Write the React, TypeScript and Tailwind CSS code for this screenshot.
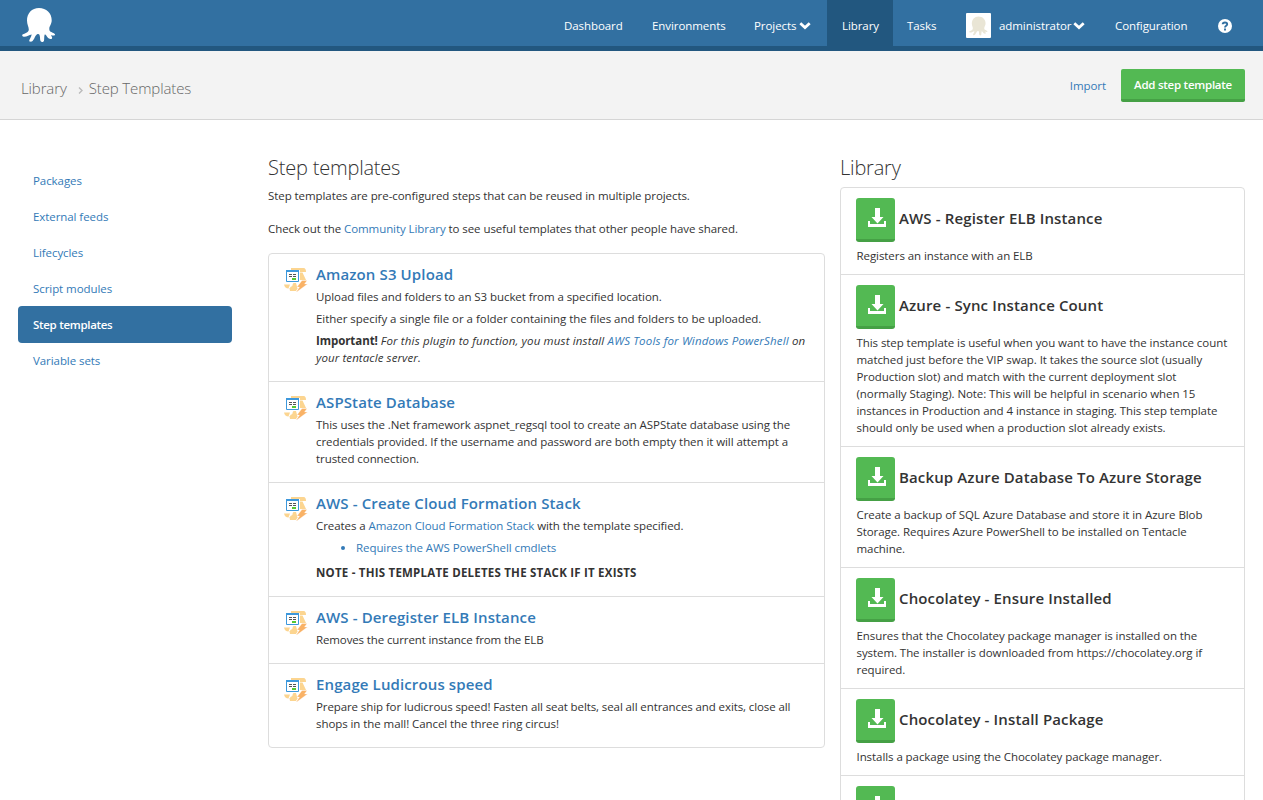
import type { ReactNode } from "react";

const link = "text-[#337ab7]";

function Octopus({ className }: { className: string }) {
  return (
    <svg viewBox="0 0 34 36" className={className} fill="currentColor" aria-hidden="true">
      <path d="M17 1C9.800 1 5 6.300 5 13.500C5 17.500 6.800 19.500 6.800 22.500C6.800 25.300 3.500 26.300.9 27.300C-.4 28 .2 29.600 1.700 29.700C5 29.900 7 28 9.700 27.400C9.200 30.500 7.200 32.300 7.200 33.700C7.400 34.900 9.500 34.900 10.600 33.900C12.600 32 13.200 28 15.600 27C17 26.600 17.500 27.500 17.800 29C18.200 31 17.900 33 18.700 34.300C19.500 35.300 21.500 35.100 22 33.700C22.400 31.900 22 29.600 22.600 27.700C24 27.200 24.300 29.200 25.700 30.500C27 31.800 28.800 32.500 29.800 31.700C30.700 30.700 29.800 29.500 28.800 28.300C30.500 28.300 31.700 29 32.700 28.200C33.700 27 32.200 26.500 31.300 25.900C29.500 24.900 27.300 24.800 27.300 21.900C27.300 19 29.700 17.300 29.700 13.300C29.700 6 24.300 1 17 1Z" />
    </svg>
  );
}

function Chevron() {
  return (
    <svg viewBox="0 0 12 8" className="h-2 w-3 shrink-0" aria-hidden="true">
      <path d="M1.300 1.300 6 5.500 10.700 1.300" fill="none" stroke="currentColor" strokeWidth="2.800" />
    </svg>
  );
}

function StepIcon() {
  return (
    <svg viewBox="0 0 24 24" className="mt-1 h-6 w-6 shrink-0" aria-hidden="true">
      <path d="M7 0H19.500C21.500 0 22 2 22 4H16V2H7Z" fill="#fcd590" />
      <path d="M16 4.500H18.500L22 12H16Z" fill="#fcd590" />
      <path d="M0 16.500H6L4.500 20.500C2 20.500.5 19 0 16.500Z" fill="#fcd590" />
      <path d="M5.500 20.500 9.500 15H12L13.500 20.500 12 23H6Z" fill="#fcd590" />
      <path d="M7 16.500H9L7.500 19Z" fill="#fff" />
      <path d="M18 12.500H23L20.500 16H23.500L12 24.500 15.500 19H13Z" fill="#f9b266" stroke="#fff" strokeWidth=".3" />
      <path d="M2.500 2.500H14.500V13.500H2.500Z" fill="#fff" stroke="#3d98dc" strokeWidth="1" />
      <path d="M2 2H15V4H2Z" fill="#3d98dc" />
      <path d="M5 6.500H8M9 6.500H12M5 8.500H8M9 8.500H12" stroke="#555" strokeWidth="1" />
      <path d="M8 10H12V12H8Z" fill="#55c933" />
    </svg>
  );
}

function DownloadIcon() {
  return (
    <svg viewBox="0 0 18 19" className="h-[19px] w-[18px]" fill="#fff" aria-hidden="true">
      <path d="M7 0H12V9H15.500L9.500 15.500 3.500 9H7Z" />
      <path d="M0 13H2V16H16V13H18V19H0Z" />
    </svg>
  );
}

function Lines({ items }: { items: ReactNode[] }) {
  return (
    <p className="mb-[5px]">
      {items.map((line, i) => (
        <span key={i} className="block whitespace-nowrap">{line}</span>
      ))}
    </p>
  );
}

function Step({ title, children }: { title: string; children: ReactNode }) {
  return (
    <article className="flex gap-2 border-t border-[#ddd] py-[10px] pl-[15px] first:border-t-0">
      <StepIcon />
      <div className="min-w-0">
        <h3 className="-mt-px mb-[3px] text-[15px] leading-[22px] font-semibold tracking-[0.12px] whitespace-nowrap text-[#337ab7]">{title}</h3>
        {children}
      </div>
    </article>
  );
}

const library: { title: string; lines: string[] }[] = [
  { title: "AWS - Register ELB Instance", lines: ["Registers an instance with an ELB"] },
  {
    title: "Azure - Sync Instance Count",
    lines: [
      "This step template is useful when you want to have the instance count",
      "matched just before the VIP swap. It takes the source slot (usually",
      "Production slot) and match with the current deployment slot",
      "(normally Staging). Note: This will be helpful in scenario when 15",
      "instances in Production and 4 instance in staging. This step template",
      "should only be used when a production slot already exists.",
    ],
  },
  {
    title: "Backup Azure Database To Azure Storage",
    lines: [
      "Create a backup of SQL Azure Database and store it in Azure Blob",
      "Storage. Requires Azure PowerShell to be installed on Tentacle",
      "machine.",
    ],
  },
  {
    title: "Chocolatey - Ensure Installed",
    lines: [
      "Ensures that the Chocolatey package manager is installed on the",
      "system. The installer is downloaded from https://chocolatey.org if",
      "required.",
    ],
  },
  { title: "Chocolatey - Install Package", lines: ["Installs a package using the Chocolatey package manager."] },
  { title: "", lines: [] },
];

export default function App() {
  return (
    <div className="h-[800px] w-[1263px] overflow-hidden bg-white font-['Open_Sans',sans-serif] text-[11.5px] leading-[17px] tracking-[-0.07px] text-[#333]">
      <header className="flex h-[51px] justify-between border-b-[5px] border-[#22577f] bg-[#3270a1] text-white">
        <Octopus className="mt-[7px] ml-[22px] h-9 w-[34px]" />
        <nav className="flex h-[46px] items-center pt-[5px] whitespace-nowrap">
          <a className="w-[88px]">Dashboard</a>
          <a className="w-[102px]">Environments</a>
          <a className="flex w-[73px] items-center gap-[3px]">Projects <Chevron /></a>
          <a className="-mt-[5px] flex h-[51px] w-[66px] items-center self-start bg-[#22577f] pl-[15px]">Library</a>
          <a className="w-[73px] pl-[14px]">Tasks</a>
          <a className="flex w-[149px] items-center">
            <span className="mr-2 flex h-[25px] w-[25px] items-center justify-center rounded-[1px] bg-white text-[#e9e5d5]">
              <Octopus className="h-5 w-[19px]" />
            </span>
            administrator<span className="ml-[2px]"><Chevron /></span>
          </a>
          <a className="w-[103px]">Configuration</a>
          <svg viewBox="0 0 14 14" className="mr-[31px] h-[14px] w-[14px]" aria-label="Help">
            <circle cx="7" cy="7" r="7" fill="#fff" />
            <path d="M4.700 5.300C4.800 2.800 9.300 2.900 9.200 5.200C9.100 6.800 7 6.600 7 8.500M7 9.500V11.500" fill="none" stroke="#3270a1" strokeWidth="1.900" />
          </svg>
        </nav>
      </header>

      <div className="flex h-[69px] items-center justify-between border-b border-[#d5d5d5] bg-[#f3f3f3] pr-[18px] pl-[21px]">
        <div className="flex items-center pt-[7px] text-[15px] font-light tracking-[-0.12px] text-[#666]">
          <span>Library</span>
          <svg viewBox="0 0 5 7" className="mt-1 mr-[6px] ml-[11px] h-[7px] w-[5px]" aria-hidden="true">
            <path d="M1 .5 4 3.500 1 6.500" fill="none" stroke="#bbb" strokeWidth="1.400" />
          </svg>
          <span>Step Templates</span>
        </div>
        <div className="flex items-center whitespace-nowrap">
          <a className={`mr-[15px] ${link}`}>Import</a>
          <button className="h-[33px] w-[124px] rounded-[2px] border-b-[3px] border-[#45a045] bg-[#53b953] pt-0.5 text-[11.5px] font-semibold tracking-[-0.25px] text-white">Add step template</button>
        </div>
      </div>

      <main className="flex items-start">
        <nav className="mt-[42px] ml-[18px] w-[214px] shrink-0 whitespace-nowrap text-[#337ab7]">
          {["Packages", "External feeds", "Lifecycles", "Script modules", "Step templates", "Variable sets"].map((item) => (
            <a
              key={item}
              className={item === "Step templates"
                ? "-mb-px flex h-[37px] items-center rounded-[4px] bg-[#3270a1] pl-[15px] font-semibold tracking-[-0.3px] text-white"
                : "flex h-9 items-center pl-[15px]"}
            >
              {item}
            </a>
          ))}
        </nav>

        <section className="mt-[36px] ml-[36px] w-[557px] shrink-0">
          <h2 className="mb-[7px] text-[20px] leading-6 font-light tracking-[-0.2px]">Step templates</h2>
          <p className="mb-4 whitespace-nowrap">Step templates are pre-configured steps that can be reused in multiple projects.</p>
          <p className="mb-4 whitespace-nowrap">
            Check out the <a className={link}>Community Library</a> to see useful templates that other people have shared.
          </p>
          <div className="rounded-[4px] border border-[#ddd]">
            <Step title="Amazon S3 Upload">
              <Lines items={["Upload files and folders to an S3 bucket from a specified location."]} />
              <Lines items={[<span className="tracking-[-0.035px]">Either specify a single file or a folder containing the files and folders to be uploaded.</span>]} />
              <Lines
                items={[
                  <><b>Important!</b> <i className="tracking-[0.155px]">For this plugin to function, you must install <a className={link}>AWS Tools for Windows PowerShell</a> on</i></>,
                  <i className="tracking-[0.1px]">your tentacle server.</i>,
                ]}
              />
            </Step>
            <Step title="ASPState Database">
              <Lines
                items={[
                  "This uses the .Net framework aspnet_regsql tool to create an ASPState database using the",
                  "credentials provided. If the username and password are both empty then it will attempt a",
                  "trusted connection.",
                ]}
              />
            </Step>
            <Step title="AWS - Create Cloud Formation Stack">
              <Lines items={[<>Creates a <a className={link}>Amazon Cloud Formation Stack</a> with the template specified.</>]} />
              <ul className="mb-2 list-disc pl-10 whitespace-nowrap text-[#337ab7]">
                <li>Requires the AWS PowerShell cmdlets</li>
              </ul>
              <Lines items={[<b className="tracking-[0.22px]">NOTE - THIS TEMPLATE DELETES THE STACK IF IT EXISTS</b>]} />
            </Step>
            <Step title="AWS - Deregister ELB Instance">
              <Lines items={[<span className="tracking-[-0.12px]">Removes the current instance from the ELB</span>]} />
            </Step>
            <Step title="Engage Ludicrous speed">
              <Lines
                items={[
                  <span className="tracking-[-0.1px]">Prepare ship for ludicrous speed! Fasten all seat belts, seal all entrances and exits, close all</span>,
                  "shops in the mall! Cancel the three ring circus!",
                ]}
              />
            </Step>
          </div>
        </section>

        <section className="mt-[36px] ml-[15px] w-[405px] shrink-0">
          <h2 className="mb-[7px] text-[20px] leading-6 font-light tracking-[-0.2px]">Library</h2>
          <div className="rounded-[4px] border border-[#ddd]">
            {library.map(({ title, lines }, i) => (
              <article key={i} className="border-t border-[#ddd] px-[15px] py-[10px] first:border-t-0">
                <div className="mb-[5px] flex h-11 gap-[4px]">
                  <button aria-label="Import template" className="flex h-11 w-[39px] shrink-0 rounded-[3px] border-b-[3px] border-[#45a045] bg-[#53b953] pt-[10px] pl-3">
                    <DownloadIcon />
                  </button>
                  <h3 className="pt-[9px] text-[15px] leading-[22px] font-semibold tracking-[0.13px] whitespace-nowrap">{title}</h3>
                </div>
                <div className="pl-[0.5px]">
                  {lines.map((line) => (
                    <span key={line} className="block whitespace-nowrap">{line}</span>
                  ))}
                </div>
              </article>
            ))}
          </div>
        </section>
      </main>
    </div>
  );
}
